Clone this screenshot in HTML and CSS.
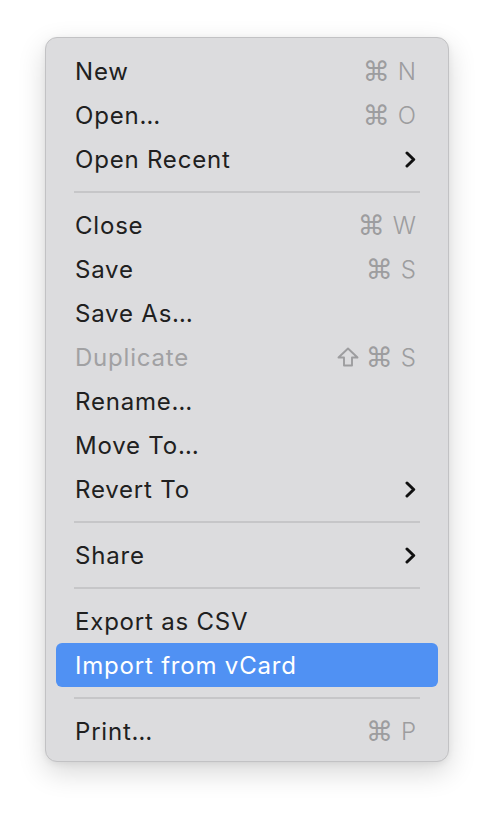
FILE: index.html
```html
<!DOCTYPE html>
<html>
<head>
<meta charset="utf-8">
<link rel="stylesheet" href="styles.css">
</head>
<body>
<div class="menu">
  <div class="item"><span class="label">New</span><span class="sc"><span class="sym">⌘</span><span class="key">N</span></span></div>
  <div class="item"><span class="label">Open…</span><span class="sc"><span class="sym">⌘</span><span class="key">O</span></span></div>
  <div class="item"><span class="label">Open Recent</span><svg class="chev" width="11" height="17" viewBox="0 0 11 17"><path d="M2 2 L8.7 8.5 L2 15" fill="none" stroke="#111" stroke-width="3" stroke-linecap="round" stroke-linejoin="round"/></svg></div>
  <div class="sep"></div>
  <div class="item"><span class="label">Close</span><span class="sc"><span class="sym">⌘</span><span class="key">W</span></span></div>
  <div class="item"><span class="label">Save</span><span class="sc"><span class="sym">⌘</span><span class="key">S</span></span></div>
  <div class="item"><span class="label">Save As…</span></div>
  <div class="item disabled"><span class="label">Duplicate</span><span class="sc"><svg class="shift" width="22" height="20" viewBox="0 0 22 20"><path d="M11 1.5 L20.5 10.5 L15 10.5 L15 18.5 L7 18.5 L7 10.5 L1.5 10.5 Z" fill="none" stroke="#9d9d9f" stroke-width="1.9" stroke-linejoin="round"/></svg><span class="sym">⌘</span><span class="key">S</span></span></div>
  <div class="item"><span class="label">Rename…</span></div>
  <div class="item"><span class="label">Move To…</span></div>
  <div class="item"><span class="label">Revert To</span><svg class="chev" width="11" height="17" viewBox="0 0 11 17"><path d="M2 2 L8.7 8.5 L2 15" fill="none" stroke="#111" stroke-width="3" stroke-linecap="round" stroke-linejoin="round"/></svg></div>
  <div class="sep"></div>
  <div class="item"><span class="label">Share</span><svg class="chev" width="11" height="17" viewBox="0 0 11 17"><path d="M2 2 L8.7 8.5 L2 15" fill="none" stroke="#111" stroke-width="3" stroke-linecap="round" stroke-linejoin="round"/></svg></div>
  <div class="sep"></div>
  <div class="item"><span class="label">Export as CSV</span></div>
  <div class="item active"><span class="label">Import from vCard</span></div>
  <div class="sep"></div>
  <div class="item"><span class="label">Print…</span><span class="sc"><span class="sym">⌘</span><span class="key">P</span></span></div>
</div>
</body>
</html>
```
FILE: styles.css
```css
html, body {
  margin: 0;
  padding: 0;
  background: #ffffff;
}
body {
  box-sizing: border-box;
  min-height: 816px;
  padding: 37px 0 0 45px;
  font-family: Inter, "Noto Sans", sans-serif;
}
.menu {
  box-sizing: border-box;
  width: 404px;
  height: 725px;
  padding: 11px 10px 8px 10px;
  background: #dcdcde;
  border: 1px solid #c2c2c4;
  border-radius: 12px;
  box-shadow: 0 10px 28px rgba(0, 0, 0, 0.16), 0 2px 6px rgba(0, 0, 0, 0.06);
}
.item {
  height: 44px;
  display: flex;
  align-items: center;
  justify-content: space-between;
  padding: 0 22px 0 19px;
  border-radius: 6px;
  font-size: 24px;
  color: #202020;
}
.item.disabled {
  color: #a1a1a3;
}
.item.active {
  background: #5091f3;
  color: #ffffff;
}
.label {
  letter-spacing: 0.8px;
}
.sc {
  display: flex;
  align-items: center;
  gap: 8px;
  color: #9d9d9f;
  font-size: 24px;
}
.sym {
  font-family: "DejaVu Sans", sans-serif;
  font-size: 27px;
  line-height: 1;
}
.shift {
  display: block;
  margin-right: -1px;
}
.key {
  font-family: Inter, sans-serif;
  font-weight: 300;
}
.chev {
  display: block;
}
.sep {
  height: 22px;
  display: flex;
  align-items: center;
  padding: 0 18px;
}
.sep::before {
  content: "";
  display: block;
  width: 100%;
  height: 2px;
  background: #c6c6c8;
}
```
